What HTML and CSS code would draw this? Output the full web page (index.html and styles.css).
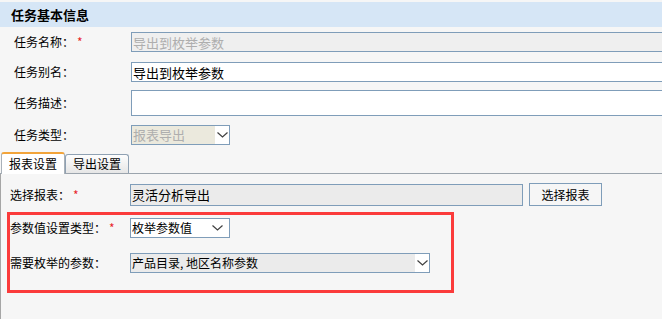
FILE: index.html
```html
<!DOCTYPE html>
<html lang="zh-CN">
<head>
    <meta charset="UTF-8">
    <title>任务基本信息</title>
    <link rel="stylesheet" href="styles.css">
</head>
<body>
    <div class="panel-title">任务基本信息</div>

    <div class="basic">
        <div class="row row-name">
            <label class="lbl">任务名称：<em>*</em></label>
            <input class="field field-off" type="text" value="导出到枚举参数" disabled>
        </div>
        <div class="row row-alias">
            <label class="lbl">任务别名：</label>
            <input class="field" type="text" value="导出到枚举参数">
        </div>
        <div class="row row-desc">
            <label class="lbl">任务描述：</label>
            <textarea class="field area"></textarea>
        </div>
        <div class="row row-type">
            <label class="lbl">任务类型：</label>
            <div class="combo combo-type">
                <span class="combo-text">报表导出</span>
                <span class="combo-btn">
                    <svg width="11" height="6" viewBox="0 0 11 6"><path d="M0.5 0.5 L5.5 5 L10.5 0.5" fill="none" stroke="#404040" stroke-width="1.2"/></svg>
                </span>
            </div>
        </div>
    </div>

    <div class="tabs">
        <div class="tab active">报表设置</div>
        <div class="tab">导出设置</div>
    </div>

    <div class="tab-body">
        <div class="row row-report">
            <label class="lbl">选择报表：<em>*</em></label>
            <input class="field field-ro" type="text" value="灵活分析导出" readonly>
            <button class="pick-button">选择报表</button>
        </div>

        <div class="highlight">
            <div class="row row-kind">
                <label class="lbl">参数值设置类型：<em>*</em></label>
                <div class="combo combo-kind">
                    <span class="combo-text">枚举参数值</span>
                    <span class="combo-btn">
                        <svg width="11" height="6" viewBox="0 0 11 6"><path d="M0.5 0.5 L5.5 5 L10.5 0.5" fill="none" stroke="#404040" stroke-width="1.2"/></svg>
                    </span>
                </div>
            </div>
            <div class="row row-params">
                <label class="lbl">需要枚举的参数：</label>
                <div class="combo combo-params">
                    <span class="combo-text">产品目录, 地区名称参数</span>
                    <span class="combo-btn">
                        <svg width="11" height="6" viewBox="0 0 11 6"><path d="M0.5 0.5 L5.5 5 L10.5 0.5" fill="none" stroke="#404040" stroke-width="1.2"/></svg>
                    </span>
                </div>
            </div>
        </div>
    </div>
</body>
</html>
```

FILE: styles.css
```css
body {
    margin: 0;
    background-color: #f6f6f6;
    font-family: "Noto Sans CJK SC", "Microsoft YaHei", sans-serif;
    font-size: 12px;
    color: #000;
    overflow: hidden;
}

.panel-title {
    margin-top: 2px;
    height: 25px;
    line-height: 25px;
    padding-left: 11px;
    background-color: #d6e6f6;
    font-size: 13px;
    font-weight: bold;
}

/* rows */
.row {
    display: flex;
    align-items: center;
}

.lbl {
    flex: none;
    line-height: 16px;
}

.lbl em {
    font-style: normal;
    color: #e8262b;
    margin-left: 3px;
}

.basic {
    padding-top: 5px;
}

.basic .lbl {
    width: 117px;
    padding-left: 14px;
}

.row-name { margin-bottom: 10px; }
.row-alias { margin-bottom: 8px; }
.row-desc { margin-bottom: 9px; }

.field {
    box-sizing: border-box;
    flex: none;
    width: 560px;
    height: 20px;
    margin: 0;
    padding: 0 1px;
    border: 1px solid #7f9db9;
    border-radius: 0;
    background-color: #fff;
    font-family: inherit;
    font-size: 13px;
    color: #000;
    outline: none;
}

.field-off {
    background-color: #efefef;
    color: #aeaeae;
}

.area {
    height: 26px;
    resize: none;
}

/* combo boxes */
.combo {
    box-sizing: border-box;
    display: flex;
    height: 20px;
    border: 1px solid #7f9db9;
    background-color: #fff;
}

.combo-text {
    flex: 1;
    padding-left: 1px;
    line-height: 18px;
    font-size: 13px;
    white-space: nowrap;
    overflow: hidden;
}

.combo-btn {
    flex: none;
    width: 14px;
    display: flex;
    align-items: center;
    justify-content: center;
    background-color: #fff;
}

.combo-type {
    width: 99px;
}

.combo-type .combo-text {
    background-color: #ebe9dd;
    color: #aeaeae;
}

.combo-kind {
    width: 100px;
}

.combo-kind .combo-text {
    font-size: 12px;
}

.combo-kind .combo-btn {
    width: 23px;
}

.combo-params {
    width: 300px;
}

.combo-params .combo-text {
    background-color: #ebebeb;
    font-size: 12px;
}

/* tabs */
.tabs {
    display: flex;
    align-items: flex-end;
    height: 21px;
    padding: 7px 0 0 1px;
    border-bottom: 1px solid #9ba4ad;
}

.tab {
    box-sizing: border-box;
    width: 64px;
    height: 19px;
    line-height: 17px;
    text-align: center;
    border: 1px solid #8fa1b3;
    border-bottom: none;
    border-radius: 3px 3px 0 0;
    background: linear-gradient(#fdfdfd, #e6e6e6);
}

.tab.active {
    height: 22px;
    margin-bottom: -1px;
    line-height: 19px;
    border-color: #a9b1b9;
    border-top: 2px solid #f2a43a;
    background: #fff;
}

.tab-body {
    border-left: 1px solid #a6a6a6;
    padding: 9px 0 40px 9px;
}

.tab-body .lbl {
    width: 120px;
}

.row-report {
    margin-bottom: 6px;
}

.row-report .field {
    width: 393px;
    height: 22px;
    background-color: #ebebeb;
}

.pick-button {
    box-sizing: border-box;
    width: 73px;
    height: 23px;
    margin-left: 6px;
    padding: 0;
    border: 1px solid #7f9db9;
    background-color: #f6f6f6;
    font-family: inherit;
    font-size: 12px;
    color: #000;
}

/* red annotation box */
.highlight {
    box-sizing: border-box;
    width: 447px;
    height: 81px;
    margin-left: -3px;
    padding-top: 3px;
    border: 3px solid #fb3b3b;
}

.highlight .lbl {
    width: 120px;
}

.row-kind {
    margin-bottom: 15px;
}
```
